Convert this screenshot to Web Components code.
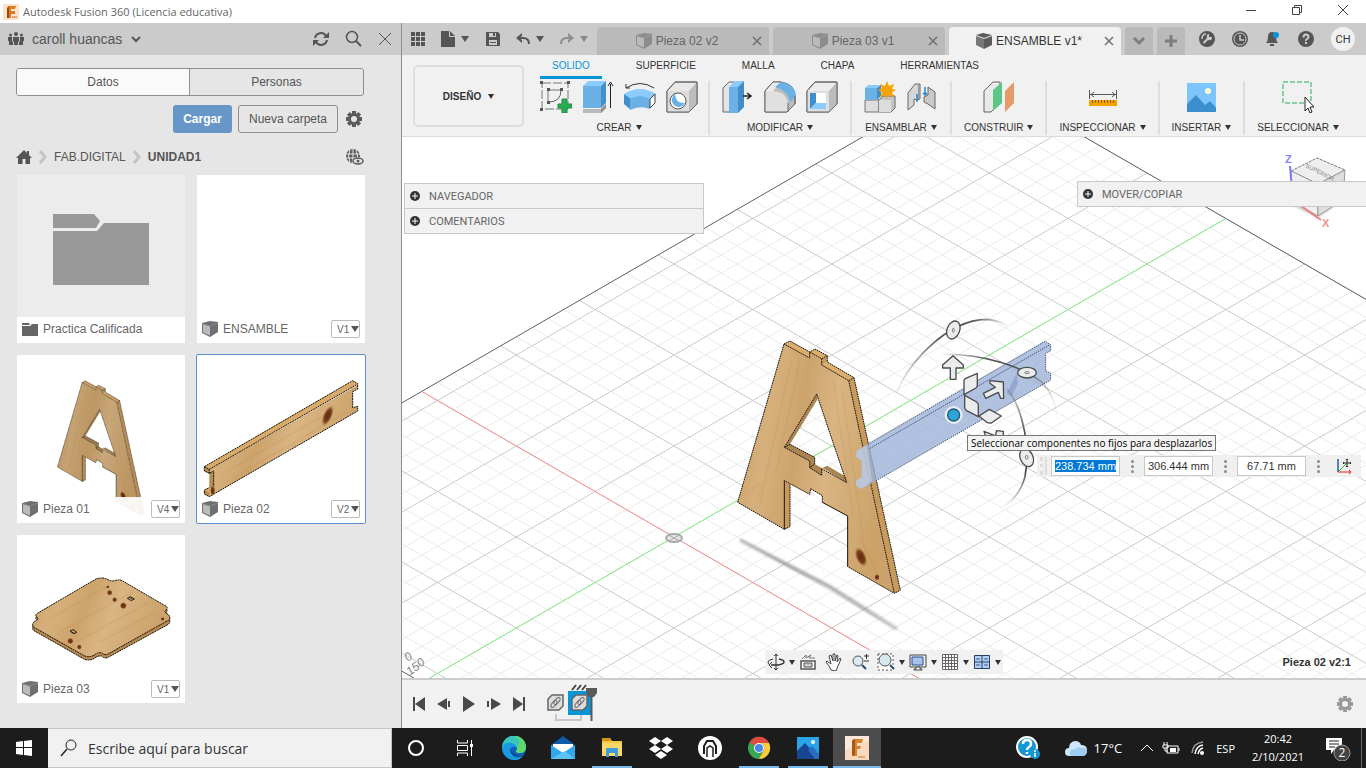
<!DOCTYPE html>
<html lang="es">
<head>
<meta charset="utf-8">
<title>Autodesk Fusion 360 (Licencia educativa)</title>
<style>
  html, body { height: 100%; }
  body {
    margin: 0;
    display: flex;
    flex-direction: column;
    overflow: hidden;
    font-family: "Liberation Sans", Arial, sans-serif;
    font-size: 12px;
    color: #333;
    background: #fff;
  }
  main { flex: 1; min-height: 0; display: flex; }
  .workspace { flex: 1; min-width: 0; display: flex; flex-direction: column; }
</style>
</head>
<body>
<title-bar>Autodesk Fusion 360 (Licencia educativa)</title-bar>
<main>
  <data-panel user="caroll huancas">
    <data-card label="Practica Calificada" folder>
      <svg viewBox="0 0 168 168"><g fill="#999"><path d="M36 39H77L83 46 79 53H36Z"/><path d="M36 56H80L87 48H132V110H36Z"/></g></svg>
    </data-card>
    <data-card label="ENSAMBLE" version="V1"></data-card>
    <data-card label="Pieza 01" version="V4"><wood-part kind="letter"></wood-part></data-card>
    <data-card label="Pieza 02" version="V2" selected><wood-part kind="plank"></wood-part></data-card>
    <data-card label="Pieza 03" version="V1"><wood-part kind="plate"></wood-part></data-card>
  </data-panel>
  <div class="workspace">
    <doc-bar>
      <doc-tab>Pieza 02 v2</doc-tab>
      <doc-tab>Pieza 03 v1</doc-tab>
      <doc-tab active>ENSAMBLE v1*</doc-tab>
    </doc-bar>
    <tool-ribbon>
      <ribbon-group label="CREAR" icons="sketch extrude revolve hole"></ribbon-group>
      <ribbon-group label="MODIFICAR" icons="presspull fillet shell"></ribbon-group>
      <ribbon-group label="ENSAMBLAR" icons="newcomp joint"></ribbon-group>
      <ribbon-group label="CONSTRUIR" icons="plane"></ribbon-group>
      <ribbon-group label="INSPECCIONAR" icons="measure"></ribbon-group>
      <ribbon-group label="INSERTAR" icons="picture"></ribbon-group>
      <ribbon-group label="SELECCIONAR" icons="select"></ribbon-group>
    </tool-ribbon>
    <model-canvas></model-canvas>
    <time-line></time-line>
  </div>
</main>
<task-bar></task-bar>

<script>
const gear = (c, hole) => `
  <g fill="${c}"><circle cx="8" cy="8" r="6"/>
  <path d="M6 0h4v16H6zM0 6h16v4H0z"/>
  <path d="M6 0h4v16H6zM0 6h16v4H0z" transform="rotate(45 8 8)"/></g>
  <circle cx="8" cy="8" r="3" fill="${hole}"/>`

// name: [width, height, drawing]
const ICONS = {
  fusion: [16, 16, `<path d="M0 0h16v16H0z" fill="#fbe3d0"/><path d="M5 2h8l-1 3H8v2h4v3H8v4H4V4z" fill="#e07a1f"/><path d="M4 4l2-1v11H4z" fill="#9a4a10"/><path d="M9 13h5" stroke="#e8a46a" stroke-width="2"/>`],
  fusionBig: [24, 24, `<path d="M0 0h24v24H0z" fill="#fbe8da"/><path d="M0 14L24 4v20H0z" fill="#f9d9c0"/><path d="M8 3h10l-1 4h-5v3h4l-1 3h-3v7H7V5z" fill="#d9822b"/><path d="M7 5l3-2v16l-3 1z" fill="#a85a17"/><path d="M13 21h7" stroke="#e8a46a" stroke-width="2"/>`],
  minimize: [12, 12, `<path d="M1 6.500h10" stroke="#444"/>`],
  restore: [12, 12, `<path d="M1.500 3.500h7v7h-7zM3.500 3V1.500h7v7H9" fill="none" stroke="#444"/>`],
  close: [12, 12, `<path d="M1 1l10 10M11 1L1 11" stroke="#444" fill="none"/>`],
  people: [16, 14, `<g fill="#555"><circle cx="2.500" cy="3" r="1.500"/><circle cx="8" cy="2" r="2"/><circle cx="13.500" cy="3" r="1.500"/><path d="M0 5h4v4l1 1v3H1V9H0zM5 5h6v4l-1 1v3H6v-3L5 9zM12 5h4v4h-1v4h-4v-3l1-1z"/></g>`],
  chevron: [12, 8, `<path d="M2 2l4 4 4-4" fill="none" stroke="#555" stroke-width="2"/>`],
  chevronGrey: [16, 10, `<path d="M3 2l5 5 5-5" fill="none" stroke="#7d7d7d" stroke-width="3"/>`],
  refresh: [18, 16, `<g fill="none" stroke="#555" stroke-width="2"><path d="M3 7a6 6 0 0 1 11-2M15 9a6 6 0 0 1-11 2"/></g><path d="M17 1v6h-6zM1 15V9h6z" fill="#555"/>`],
  search: [18, 18, `<circle cx="7" cy="7" r="5.500" fill="none" stroke="#555" stroke-width="1.500"/><path d="M11 11l5 5" stroke="#555" stroke-width="2"/>`],
  bigClose: [14, 14, `<path d="M1 1l12 12M13 1L1 13" stroke="#555" fill="none"/>`],
  gear: [16, 16, gear('#5b5b5b', '#e6e6e6')],
  gearGrey: [16, 16, gear('#999', '#f1f1f1')],
  home: [16, 14, `<path d="M8 0l3 3V1h2v4l3 3h-2v6H9.500V9h-3v5H2V8H0z" fill="#555"/>`],
  crumb: [8, 14, `<path d="M1 1l5 6-5 6" fill="none" stroke="#c4c4c4" stroke-width="3"/>`],
  globe: [18, 16, `<circle cx="7" cy="7" r="7" fill="#5b5b5b"/><path d="M0 5h14M0 9h14M7 0v14M4 1Q1 7 4 13M10 1q3 6 0 12" stroke="#e6e6e6" fill="none"/><ellipse cx="12" cy="12" rx="6" ry="4" fill="#e6e6e6"/><ellipse cx="12" cy="12" rx="5" ry="3" fill="none" stroke="#5b5b5b" stroke-width="1.500"/><circle cx="12" cy="12" r="1.500" fill="#5b5b5b"/>`],
  folder: [16, 13, `<path d="M0 0h7l1 1-1 1H0zM0 3h8l2-2h6v12H0z" fill="#666"/>`],
  cube: [16, 16, `<path d="M0 2l8-2 8 1v10l-8 5-8-4z" fill="#6f6f6f"/><path d="M1 3l7 2.500v9L1 11.500z" fill="#b9bcbb"/><path d="M0 2.500l8 2.500 8-3" fill="none" stroke="#8a8a8a"/>`],
  cubeDark: [16, 16, `<path d="M0 2l7-2 9 2-8 3z" fill="#5b5b5b"/><path d="M0 3l8 3v10l-8-4z" fill="#777"/><path d="M8 6l8-3v9l-8 4z" fill="#5b5b5b"/><path d="M0 2.500l8 3 8-3" stroke="#bbb" fill="none"/>`],
  caret: [8, 6, `<path d="M0 0h8L4 6z" fill="#555"/>`],
  caretSmall: [6, 5, `<path d="M0 0h6L3 5z" fill="#333"/>`],
  apps: [14, 14, `<path d="M0 0h4v4H0zM5 0h4v4H5zM10 0h4v4h-4zM0 5h4v4H0zM5 5h4v4H5zM10 5h4v4h-4zM0 10h4v4H0zM5 10h4v4H5zM10 10h4v4h-4z" fill="#555"/>`],
  file: [14, 16, `<path d="M0 0h8v6h6v10H0zM9 0l5 5H9z" fill="#555"/>`],
  save: [14, 14, `<path d="M0 0h12l2 2v12H0z" fill="#555"/><path d="M3 1h7v4H3zM3 8h8v5H3z" fill="#ccc"/><path d="M7 1h2v3H7zM4 10h6v1H4z" fill="#555"/>`],
  undo: [14, 12, `<path d="M6 0v3l-3 2 3 2v3L0 5z" fill="#555"/><path d="M2 5h5q6 0 6 6" fill="none" stroke="#555" stroke-width="2"/>`],
  redo: [14, 12, `<path d="M8 0v3l3 2-3 2v3l6-5z" fill="#8d8d8d"/><path d="M12 5H7q-6 0-6 6" fill="none" stroke="#8d8d8d" stroke-width="2"/>`],
  tabClose: [10, 10, `<path d="M1 1l8 8M9 1L1 9" stroke="#707070" stroke-width="1.500"/>`],
  plus: [14, 14, `<path d="M7 1v12M1 7h12" stroke="#7d7d7d" stroke-width="3"/>`],
  extension: [16, 16, `<circle cx="8" cy="8" r="8" fill="#555"/><path d="M4 11l4-4q-1-4 2-4v3h3q0 4-4 3l-4 4z" fill="#ccc"/><path d="M3 8q0-5 4-5" stroke="#ccc" stroke-width="1.500" fill="none"/>`],
  clock: [16, 16, `<circle cx="8" cy="8" r="8" fill="#555"/><circle cx="8" cy="8" r="6" fill="none" stroke="#ccc"/><path d="M8 4v5h4" stroke="#ccc" stroke-width="1.500" fill="none"/>`],
  bell: [16, 16, `<path d="M7 1q4 0 4 5 0 4 2 6H1q2-2 2-6 0-5 4-5zM5 13h4v2H5z" fill="#555"/><circle cx="11" cy="4" r="3" fill="#0696d7"/>`],
  help: [16, 16, `<circle cx="8" cy="8" r="8" fill="#555"/><path d="M5.500 6.500q0-3 2.500-3t2.500 2.500q0 1-1.500 2T8 10" stroke="#ccc" stroke-width="2" fill="none"/><path d="M7 11h2v2H7z" fill="#ccc"/>`],
  sketch: [32, 32, `<path d="M2 2h26v26H2z" fill="none" stroke="#777" stroke-dasharray="9 2"/><path d="M8 22V9h14" fill="none" stroke="#777"/><path d="M21 9q0 12-12 12" fill="none" stroke="#666"/><path d="M0 0h3v3H0zM27 0h3v3h-3zM0 27h3v3H0zM7 7h3v3H7zM20 7h3v3h-3zM7 20h3v3H7z" fill="#555"/><path d="M22 18h5v5h5v4h-5v5h-5v-5h-4v-4h4z" fill="#27ae55" stroke="#1d9145"/>`],
  extrude: [32, 32, `<path d="M1 28h18l5-4v3l-5 5H1z" fill="#b9b9b9"/><path d="M19 28l5-5v4l-5 5z" fill="#8e8e8e"/><path d="M1 5h18v22H1z" fill="#6cb1e6"/><path d="M1 5l5-5h18l-5 5z" fill="#8ccbff"/><path d="M19 5l5-5v22l-5 5z" fill="#4190cc"/><path d="M28.500 27V3M26 5l2.500-4L31 5" stroke="#222" fill="none"/>`],
  revolve: [32, 32, `<path d="M0 13Q16 3 32 13l-6 6Q16 13 6 19z" fill="#8ccbff"/><path d="M0 13l7 5v11l-7-6z" fill="#3f8ecb"/><path d="M6 18q10-6 20 0v10q-10-4-20 1z" fill="#6cb1e6"/><path d="M26 18l5-5v9l-5 5z" fill="#fff" stroke="#444"/><path d="M2 7Q16-2 30 7M2 3v4h4" fill="none" stroke="#333"/>`],
  hole: [32, 32, `<path d="M1 10l8-9h22v22l-8 8H1z" fill="#e9e9e9" stroke="#666"/><path d="M23 10l8-9v22l-8 8z" fill="#bcbcbc"/><path d="M1 10h22v21H1z" fill="#dcdcdc"/><path d="M1 10l8-9h22v22l-8 8H1z" fill="none" stroke="#666"/><circle cx="12" cy="20" r="8" fill="#fff" stroke="#555"/><path d="M9 13a7 7 0 1 0 10 9Q10 23 9 13z" fill="#6cb1e6"/>`],
  presspull: [32, 32, `<path d="M1 7l6-6h5v30H1z" fill="#e4e4e4" stroke="#666"/><path d="M7 6h9v26H7z" fill="#6cb1e6"/><path d="M7 6l6-6h9l-6 6z" fill="#8ccbff"/><path d="M16 6l6-6v26l-6 6z" fill="#3f8ecb"/><path d="M21 15h8M25 12l4 3-4 3" stroke="#222" stroke-width="1.500" fill="none"/>`],
  fillet: [32, 32, `<path d="M1 10l8-9h8q14 2 14 14v8l-8 8H1z" fill="#bcbcbc" stroke="#666"/><path d="M1 10h8q14 1 15 13v8H1z" fill="#e0e0e0"/><path d="M1 10l8-9h8l-8 9z" fill="#ededed"/><path d="M11 6l6-5q14 2 15 14l-6 6Q24 9 11 6z" fill="#6cb1e6"/><path d="M17 1L9 1 1 10v21h22l8-8v-8M24 31V22" fill="none" stroke="#666"/>`],
  shell: [32, 32, `<path d="M1 10l8-9h22v22l-8 8H1z" fill="#ededed" stroke="#666"/><path d="M23 10l8-9v22l-8 8z" fill="#bcbcbc"/><path d="M1 10h22v21H1z" fill="#dedede"/><path d="M1 10l8-9h22v22l-8 8H1z" fill="none" stroke="#666"/><path d="M4 12h16v16H4z" fill="#fff"/><path d="M4 12h6v10l-6 6z" fill="#3f8ecb"/><path d="M4 28l6-6h10v6z" fill="#8ccbff"/>`],
  newcomp: [32, 32, `<path d="M1 19h14v12H1z" fill="#ddd" stroke="#777"/><path d="M15 19l4-4h12v12l-4 4H15z" fill="#c4c4c4" stroke="#666"/><path d="M15 19h12v12H15z" fill="#dcdcdc"/><path d="M1 7h12v12H1z" fill="#6cb1e6"/><path d="M1 7l3-3h13l-4 3z" fill="#8ccbff"/><path d="M13 7l4-3v11l-4 4z" fill="#3f8ecb"/><path d="M23 0l2 5 5-2-2 5 4 1-4 2 2 5-5-2-2 4-2-4-5 2 2-5-4-2 4-2-2-4 5 2z" fill="#f5a300"/>`],
  joint: [32, 32, `<path d="M2 12L9 3h5v15l-3 1-3-1v6l-6 5z" fill="#d7d7d7" stroke="#666"/><path d="M13 4v14" stroke="#999" stroke-width="2"/><path d="M18 16l4-2V6l7 5v17l-7-5-4-2z" fill="#c9c9c9" stroke="#666"/><path d="M11 21v-8M19 6v8M17 12l2 2 2-2" stroke="#1a86d8" stroke-width="1.500" fill="none"/>`],
  plane: [32, 32, `<path d="M1 10l9-9h7v21l-9 9H1z" fill="#e9e9e9" stroke="#666"/><path d="M10 9l9-8v21l-9 8z" fill="#5cc685"/><path d="M22 10l9-9v21l-9 9z" fill="#e59a68"/>`],
  measure: [32, 32, `<path d="M2.500 9v9M29.500 9v9M3 13.500h26M7 11l-3 2.500 3 2.500M25 11l3 2.500-3 2.500" stroke="#555" fill="none"/><path d="M2 19h28v6H2z" fill="#f5a300"/><path d="M5.500 19v3M8.500 19v3M11.500 19v3M14.500 19v3M17.500 19v3M20.500 19v3M23.500 19v3M26.500 19v3" stroke="#8b5a00"/>`],
  picture: [32, 32, `<path d="M2 2h29v29H2z" fill="#7cc5fd"/><path d="M2 23l9-9 9 10 5-4 6 7v4H2z" fill="#3b8fce"/><circle cx="23" cy="10" r="3" fill="#fdfbd0"/>`],
  select: [32, 32, `<path d="M1 1h28v21H1z" fill="none" stroke="#27ae55" stroke-dasharray="5 2"/><path d="M23 16v14l3-3 2 5 2-1-2-5h4z" fill="#fff" stroke="#222"/>`],
  add: [10, 10, `<circle cx="5" cy="5" r="5" fill="#333"/><path d="M5 2v6M2 5h6" stroke="#fff"/>`],
  orbit: [18, 18, `<path d="M9 1v16M7 3l2-2 2 2M7 15l2 2 2-2" stroke="#333" fill="none"/><path d="M12 6q5 1 5 3t-6 3H4" fill="none" stroke="#333" stroke-width="1.500"/><path d="M6 6Q1 7 1 9t2 3M5 9l-3 3 3 3" fill="none" stroke="#333"/>`],
  lookat: [18, 18, `<path d="M2 8h14v8H2z" fill="#fff" stroke="#555" stroke-width="1.500"/><path d="M5 10h8v4H5z" fill="#ccc" stroke="#555"/><path d="M3 6l4-4v3l5-3-2 3h6" fill="none" stroke="#777"/>`],
  hand: [18, 18, `<path d="M6 17Q4 12 1 9l1-1 4 3L4 3l2-1 2 6V1h2v7l2-6 1 1-1 6 3-4 1 1-3 7-2 5z" fill="#fff" stroke="#444"/>`],
  zoom: [18, 18, `<circle cx="7" cy="8" r="5" fill="#dce9ef" stroke="#555"/><path d="M11 12l4 4" stroke="#284a70" stroke-width="2"/><path d="M13 3h5M15.500 1v5M13 8h5" stroke="#333"/>`],
  zoomWin: [18, 18, `<path d="M1 1h15v16H1z" stroke="#555" stroke-dasharray="2 2" fill="#fff"/><circle cx="8" cy="7" r="6" fill="#d5e8ec" stroke="#555"/><path d="M13 12l4 4" stroke="#284a70" stroke-width="2"/>`],
  display: [18, 18, `<path d="M1 2h16v12H1z" fill="#eee" stroke="#444"/><path d="M3 4h11v8H3z" fill="#a6c4ed" stroke="#27508c"/><path d="M7 14h4v2h2v1H5v-1h2z" fill="#fff" stroke="#444"/>`],
  grid: [18, 18, `<path d="M1 1h16v16H1z" fill="#fff"/><path d="M1.500 1.500h15v15h-15zM4.500 1v16M7.500 1v16M10.500 1v16M13.500 1v16M1 4.500h16M1 7.500h16M1 10.500h16M1 13.500h16" stroke="#666" fill="none"/>`],
  layout: [18, 18, `<path d="M1.500 2.500h15v13h-15z" fill="#b4cff2" stroke="#273f68"/><path d="M9 3v12M1 9h15" stroke="#273f68"/><path d="M3.500 5.500h3v1h-3zM11.500 5.500h3v1h-3zM3.500 11.500h3v1h-3zM11.500 11.500h3v1h-3z" fill="none" stroke="#6d8db8"/>`],
  triad: [16, 16, `<path d="M2 1v13" stroke="#1f5f99" stroke-width="1.500"/><path d="M2 14l8-8" stroke="#2eb82e"/><path d="M2 14h13M13 12l2 2-2 2" stroke="#e02020" fill="none"/><path d="M11 1v8M7 5h8M10 2l1-1 1 1M10 8l1 1 1-1M8 4L7 5l1 1M14 4l1 1-1 1" stroke="#222" fill="none"/>`],
  first: [14, 16, `<path d="M1 1h2v14H1zM13 1v14L3 8z" fill="#4a4a4a"/>`],
  back: [14, 16, `<path d="M10 2v12L0 8zM11 5h2v6h-2z" fill="#4a4a4a"/>`],
  play: [14, 16, `<path d="M1 0l12 8-12 8z" fill="#4a4a4a"/>`],
  next: [14, 16, `<path d="M4 2v12l10-6zM0 5h2v6H0z" fill="#4a4a4a"/>`],
  last: [14, 16, `<path d="M11 1h2v14h-2zM1 1v14l10-7z" fill="#4a4a4a"/>`],
  history: [56, 40, `<path d="M9 30v6h25v-6" fill="none" stroke="#c8c8c8" stroke-width="2"/>
    <path d="M21 7h24v24H21z" fill="#0696d7"/><path d="M25 6l4-5M30 6l4-5M35 6l4-5" stroke="#444" stroke-width="2"/>
    <g id="f"><path d="M1 15l4-4h11v11l-4 4H1z" fill="#ddd" stroke="#666" stroke-width="1.500"/><ellipse cx="7" cy="20" rx="2" ry="4" transform="rotate(40 7 20)" fill="none" stroke="#666"/><ellipse cx="10" cy="17" rx="2" ry="4" transform="rotate(40 10 17)" fill="none" stroke="#666"/></g>
    <use href="#f" x="24"/><path d="M39 4h11v5l-3 4h-5l-3-4z" fill="#5a5a5a"/><path d="M44.500 11v26" stroke="#5a5a5a" stroke-width="2"/>`],
  windows: [16, 16, `<path d="M0 2l7-1v6H0zM8 1l8-1v7H8zM0 8h7v7l-7-1zM8 8h8v8l-8-1z" fill="#fff"/>`],
  loupe: [18, 18, `<circle cx="11" cy="6" r="5" fill="none" stroke="#222"/><path d="M7 10l-6 7" stroke="#222" stroke-width="1.500"/>`],
  cortana: [24, 24, `<circle cx="12" cy="12" r="7" fill="none" stroke="#fff" stroke-width="2"/>`],
  taskview: [24, 24, `<path d="M4.500 4v3h10V4M4.500 20v-3h10v3M4.500 9.500h10v5h-10zM18.500 4v16" fill="none" stroke="#fff"/><path d="M17 8h3v3h-3z" fill="#fff"/>`],
  edge: [24, 24, `<circle cx="12" cy="12" r="12" fill="#0c63b8"/><path d="M0 12a12 12 0 0 1 24-1q0 6-6 6-4 0-4-2 2-2 0-5-5-5-14 2z" fill="#35c6c0"/><path d="M12 0q11 1 12 10 0 7-6 7-4 0-4-2 2-2 1-5Q21 6 12 0z" fill="#5fd86a"/><path d="M0 12q2-6 9-5 5 1 6 5-4-3-6 0-2 4 2 8 5 3 10 0-4 5-10 4Q1 22 0 12z" fill="#1a9ade"/><path d="M9 12q-2 4 2 7 5 3 10 0-2 1-6 0-6-2-6-7z" fill="#0a4a94"/>`],
  mail: [24, 24, `<path d="M0 9l12-9 12 9v14H0z" fill="#0c5cab"/><path d="M2 8h20v10H2z" fill="#fff"/><path d="M0 9l12 8 12-8v14H0z" fill="#2fa9ec"/><path d="M0 23l14-8 10 8z" fill="#5cc4f5"/>`],
  explorer: [24, 24, `<path d="M2 2h8l2 3h10v15H2z" fill="#f6c944"/><path d="M2 2h8l2 3H2z" fill="#d59510"/><path d="M2 7h20v13H2z" fill="#fbd765"/><path d="M6 12h12v9h-3v-4H9v4H6z" fill="#3f9be0"/>`],
  dropbox: [24, 24, `<path d="M6 1l6 4-6 4-6-4zM18 1l6 4-6 4-6-4zM6 9l6 4-6 4-6-4zM18 9l6 4-6 4-6-4zM12 15l6 4-6 4-6-4z" fill="#fff"/>`],
  arch: [24, 24, `<circle cx="12" cy="12" r="12" fill="#fff"/><path d="M6 18v-8l3-5h6l3 5v8" fill="none" stroke="#1c1c1c" stroke-width="2"/><path d="M9 21v-9l3-2 3 2v9" fill="none" stroke="#1c1c1c" stroke-width="1.500"/>`],
  chrome: [24, 24, `<circle cx="12" cy="12" r="11" fill="#3aa655"/><path d="M12 12L2.500 6.500A11 11 0 0 1 22 7H12z" fill="#e04a3f"/><path d="M22 7a11 11 0 0 1-10 16l5-9q1-4-3-7z" fill="#fbcb3c"/><circle cx="12" cy="12" r="5" fill="#fff"/><circle cx="12" cy="12" r="4" fill="#4a86ee"/>`],
  photos: [24, 24, `<path d="M1 1h22v22H1z" fill="#28a4ea"/><path d="M1 15l8-8 14 16H1z" fill="#17458f"/><path d="M12 14l4-4 7 8v5h-4z" fill="#2c6cc0"/><circle cx="17" cy="6" r="2" fill="#fff"/>`],
  support: [24, 24, `<circle cx="11" cy="11" r="10" fill="#1596d4" stroke="#fff" stroke-width="2"/><path d="M7 8q0-4 4-4t4 4q0 2-2 3t-2 3M11 16v2" fill="none" stroke="#fff" stroke-width="2.500"/><circle cx="19" cy="18" r="5" fill="#1596d4"/><path d="M19 14v2M19 17v4" stroke="#fff" stroke-width="1.500"/>`],
  cloud: [24, 18, `<path d="M5 17q-4 0-4-4t4-4q0-6 6-7 5 0 6 4 6 0 6 5 0 6-5 6z" fill="#cde6fa"/><path d="M8 17q-3-1-2-4t5-3q2-3 6-1 5-1 6 2 0 6-5 6z" fill="#9fcdf2"/>`],
  up: [14, 8, `<path d="M1 7l6-6 6 6" fill="none" stroke="#fff"/>`],
  battery: [18, 14, `<path d="M5 5h11v7H5zM17 7v3" fill="none" stroke="#fff"/><path d="M8 7h6v4H8z" fill="#fff"/><path d="M2 1v3M5 1v3M1 4h5v3H1zM3 7v3h3" fill="none" stroke="#fff"/>`],
  wifi: [16, 16, `<path d="M2 13Q3 3 13 2" stroke="#999" fill="none" stroke-width="1.500"/><path d="M5 14q1-8 8-9M8 14q1-5 5-6" stroke="#fff" fill="none" stroke-width="1.500"/><circle cx="12" cy="13" r="2" fill="#fff"/>`],
  notify: [26, 26, `<path d="M1 3h16v12H9l-3 4v-4H1z" fill="#fff"/><path d="M4 6h10M4 9h10M4 12h6" stroke="#1c1c1c"/><circle cx="17" cy="18" r="8" fill="#444" stroke="#999"/><text x="17" y="22" font-size="12" text-anchor="middle" fill="#fff">2</text>`]
}

class BaseElement extends HTMLElement {
  constructor() {
    super()
    this.attachShadow({ mode: 'open' })
  }
  connectedCallback() {
    this.shadowRoot.innerHTML = this.render()
  }
}

const RESET = `
  button, input, select { font: inherit; color: inherit; margin: 0; padding: 0; border: 0; background: none; box-sizing: border-box; }
  button { display: flex; align-items: center; justify-content: center; }
  a { color: inherit; text-decoration: none; }
`

class FxIcon extends BaseElement {
  render() {
    const [w, h, art] = ICONS[this.getAttribute('name')]
    return `<style>:host { display: block; flex: none; } svg { display: block; }</style>
      <svg width="${w}" height="${h}" viewBox="0 0 ${w} ${h}" aria-hidden="true">${art}</svg>`
  }
}

class TitleBar extends BaseElement {
  render() {
    return `<style>${RESET}
        :host { display: flex; align-items: center; height: 23px; padding-left: 3px; gap: 4px; background: #fff; color: #666; font: 11px "Open Sans", sans-serif; }
        h1 { flex: 1; margin: 0; font: inherit; }
        button { width: 46px; height: 20px; }
        .window { display: flex; align-self: flex-start; }
      </style>
      <fx-icon name="fusion"></fx-icon><h1><slot></slot></h1>
      <div class="window">
        <button aria-label="Minimizar"><fx-icon name="minimize"></fx-icon></button>
        <button aria-label="Restaurar"><fx-icon name="restore"></fx-icon></button>
        <button aria-label="Cerrar"><fx-icon name="close"></fx-icon></button>
      </div>`
  }
}

class DataPanel extends BaseElement {
  render() {
    return `<style>${RESET}
        :host { display: flex; flex-direction: column; width: 401px; flex: none; background: #e6e6e6; border-right: 1px solid #8f8f8f; color: #555; }
        header { display: flex; align-items: center; height: 32px; padding: 0 9px 0 8px; background: #cbcbcb; font-size: 14px; }
        header .user { gap: 8px; margin-right: auto; }
        header .tools { display: flex; align-items: center; gap: 15px; }
        .body { padding: 13px 37px 0 16px; }
        .segments { display: grid; grid-template-columns: 1fr 1fr; height: 28px; box-sizing: border-box; border: 1px solid #8f8f8f; border-radius: 3px; overflow: hidden; }
        .segments .on { background: #fafafa; border-right: 1px solid #8f8f8f; }
        .actions { display: flex; justify-content: flex-end; align-items: center; gap: 6px; height: 28px; margin-top: 9px; padding-right: 2px; }
        .actions button { height: 28px; border-radius: 3px; }
        .primary { width: 59px; background: #6796c9; color: #fff; font-weight: bold; }
        .plain { width: 100px; border: 1px solid #8f8f8f; margin-right: 2px; }
        nav { display: flex; align-items: center; gap: 7px; height: 18px; margin: 15px 0 9px; }
        nav b { flex: 1; }
        .grid { display: grid; grid-template-columns: 1fr 1fr; gap: 12px; margin: 0 -1px 0 1px; }
      </style>
      <header>
        <button class="user"><fx-icon name="people"></fx-icon>${this.getAttribute('user')}<fx-icon name="chevron"></fx-icon></button>
        <div class="tools">
          <button aria-label="Actualizar"><fx-icon name="refresh"></fx-icon></button>
          <button aria-label="Buscar"><fx-icon name="search"></fx-icon></button>
          <button aria-label="Cerrar panel"><fx-icon name="bigClose"></fx-icon></button>
        </div>
      </header>
      <div class="body">
        <div class="segments"><button class="on">Datos</button><button>Personas</button></div>
        <div class="actions">
          <button class="primary">Cargar</button><button class="plain">Nueva carpeta</button>
          <button aria-label="Ajustes"><fx-icon name="gear"></fx-icon></button>
        </div>
        <nav>
          <a href="#" aria-label="Inicio"><fx-icon name="home"></fx-icon></a><fx-icon name="crumb"></fx-icon>
          <a href="#">FAB.DIGITAL</a><fx-icon name="crumb"></fx-icon><b>UNIDAD1</b><fx-icon name="globe"></fx-icon>
        </nav>
        <div class="grid"><slot></slot></div>
      </div>`
  }
}

class DataCard extends BaseElement {
  render() {
    const folder = this.hasAttribute('folder')
    const version = this.getAttribute('version')
    return `<style>${RESET}
        :host { display: grid; grid-template-rows: 1fr 26px; height: 168px; background: #fff; color: #666; overflow: hidden; }
        :host([folder]) { background: linear-gradient(#ececec 142px, #fff 142px); }
        :host([selected]) { outline: 1px solid #5c8fd0; border-radius: 1px; }
        ::slotted(*) { grid-area: 1 / 1 / 3 / 2; display: block; width: 100%; height: 168px; }
        footer { grid-area: 2 / 1; position: relative; display: flex; align-items: center; gap: 5px; padding: 0 5px 2px; background: rgba(255,255,255,.92); }
        .name { flex: 1; }
        .version { display: grid; align-items: center; }
        select { grid-area: 1 / 1; appearance: none; width: 29px; height: 18px; padding-left: 5px; border: 1px solid #bbb; border-radius: 2px; background: #fff; font-size: 10px; }
        .version fx-icon { grid-area: 1 / 1; justify-self: end; margin-right: 1px; pointer-events: none; }
      </style>
      <slot></slot>
      <footer>
        <fx-icon name="${folder ? 'folder' : 'cube'}"></fx-icon><span class="name">${this.getAttribute('label')}</span>
        ${version ? `<label class="version"><select aria-label="Versión"><option>${version}</option></select><fx-icon name="caret"></fx-icon></label>` : ''}
      </footer>`
  }
}

const WOOD = `<defs>
    <linearGradient id="wood" x1="0" y1="0" x2="1" y2=".25">
      <stop offset="0" stop-color="#c69c63"/><stop offset=".25" stop-color="#d6b07c"/><stop offset=".45" stop-color="#cda36c"/>
      <stop offset=".65" stop-color="#d9b583"/><stop offset="1" stop-color="#cca26a"/>
    </linearGradient>
    <radialGradient id="knot"><stop offset="0" stop-color="#5d2a12"/><stop offset=".6" stop-color="#7b3f1d"/><stop offset="1" stop-color="#b07a42" stop-opacity="0"/></radialGradient>
  </defs>`

const LETTER = `
  <path fill="url(#wood)" fill-rule="evenodd" d="M192 42L269 84V66L305 86V105L386 152L523 790L383 710V558L307 517V497L272 476L269 493L193 452V598L53 517Z M290 192L193 352L269 393V413L305 436V416L380 458Z"/>
  <g fill="none" stroke="#b78546" stroke-width="4" opacity=".18"><path d="M215 90L120 520M240 90L170 420M340 150L400 560M365 170L440 700M95 480q40-40 20 20M420 620l60 130"/></g>
  <g fill="#dcae6b"><path d="M192 42L210 33 269 66V84ZM305 105L322 96 402 143 386 152ZM269 66L285 57 322 77 305 86Z"/></g>
  <path fill="#c89a5c" d="M305 86L322 77V96L305 105ZM386 152L402 143 541 781 523 790ZM193 452L210 461V590L193 598Z"/>
  <path fill="#ac8452" d="M290 192L293 207 210 343 193 352ZM193 352L210 343 284 382V402L269 413V393ZM269 413L284 402 307 415 305 436ZM307 413L322 407 378 440 380 458Z"/>
  <g fill="none" stroke="#161009" stroke-width="3"><path stroke-dasharray="5 2" d="M192 42L269 84V66L305 86V105L386 152L523 790L383 710M307 517V497L272 476L269 493L193 452M193 598L53 517L192 42M290 192L193 352L269 393V413L305 436V416L380 458ZM192 42L210 33 269 66 285 57 322 77V96L402 143 541 781 523 790M386 152L402 143M305 86L322 77M193 598L210 590V463M193 352L210 343 284 382V402L269 413"/><path d="M193 452V598M383 710V558L307 517"/></g>
  <ellipse cx="423" cy="681" rx="16" ry="32" transform="rotate(-22 423 681)" fill="url(#knot)"/><ellipse cx="471" cy="742" rx="8" ry="10" fill="url(#knot)"/>`

const PARTS = {
  letter: ['0 0 168 168', `<g transform="translate(31 20) scale(.178)" style="filter: brightness(.92)">${LETTER}</g>`],
  plank: ['591 30 504 504', `
    <path fill="url(#wood)" d="M628 374L1073 120V132L1058 140V188L1073 184V198L628 455 613 447V435L628 430 641 420V378L628 384Z"/>
    <path fill="#b98a50" d="M613 365L628 372V386L613 378ZM628 384L641 378V424L628 432ZM613 435L628 441V455L613 447Z"/>
    <path fill="#d9ab66" d="M613 365L1058 107 1073 116 628 373ZM613 435L628 427 641 434 628 441Z"/>
    <path fill="none" stroke="#b78546" stroke-width="4" opacity=".2" d="M680 380L980 205M700 400L1040 200M800 340q60-40 90-40"/>
    <path fill="none" stroke="#161009" stroke-width="3" stroke-dasharray="6 2" d="M613 365L1058 107 1073 116V132L1058 140V188L1073 184V198L628 455 613 447V435L628 428M613 365L628 373 1073 117M613 365V378L628 385 641 378V425M628 373V385"/>
    <ellipse cx="983" cy="212" rx="14" ry="34" transform="rotate(24 983 212)" fill="url(#knot)"/><ellipse cx="638" cy="437" rx="8" ry="16" fill="url(#knot)"/>`],
  plate: ['51 570 504 504', `
    <g stroke="#161009" stroke-width="3" stroke-dasharray="6 2"><path fill="#b98a50" transform="translate(0 8)" d="M290 701Q310 696 322 703T345 707Q358 702 368 708L490 779Q508 786 498 795 490 802 505 808 514 820 505 830L326 928Q315 935 305 925 290 924 282 933 265 941 250 933L100 848Q95 838 103 829 116 825 113 818 102 812 112 805Z"/>
    <path fill="url(#wood)" d="M290 701Q310 696 322 703T345 707Q358 702 368 708L490 779Q508 786 498 795 490 802 505 808 514 820 505 826L326 926Q315 933 305 923 290 922 282 931 265 939 250 931L100 846Q95 838 103 829 116 825 113 818 102 812 112 805Z"/></g>
    <path fill="none" stroke="#b98a4a" stroke-width="5" opacity=".2" d="M150 820L330 720M180 860L400 740M230 890L450 770M300 890L470 800"/>
    <g fill="url(#knot)"><circle cx="329" cy="743" r="9"/><circle cx="323" cy="726" r="5"/><circle cx="344" cy="764" r="8"/><circle cx="370" cy="782" r="11"/><circle cx="211" cy="888" r="10"/><circle cx="238" cy="906" r="8"/><circle cx="488" cy="822" r="6"/></g>
    <path stroke="#2d2414" stroke-width="3" fill="none" d="M382 760l12 7 9-5-12-7zM388 757l9 6M210 858l12 8 9-4-12-8zM214 862l10 3"/>`]
}

class WoodPart extends BaseElement {
  render() {
    const [box, art] = PARTS[this.getAttribute('kind')]
    return `<style>:host { display: block; } svg { display: block; width: 100%; height: 100%; }</style>
      <svg viewBox="${box}" aria-hidden="true">${WOOD}${art}</svg>`
  }
}

class DocBar extends BaseElement {
  render() {
    return `<style>${RESET}
        :host { display: flex; align-items: center; height: 32px; background: #cbcbcb; }
        .quick { display: flex; align-items: center; padding: 0 9px; width: 177px; box-sizing: content-box; justify-content: space-between; }
        .quick div { display: flex; align-items: center; gap: 6px; }
        .dim { opacity: .55; }
        .tabs { flex: 1; display: flex; align-self: flex-end; gap: 4px; }
        .tabs > button { width: 28px; height: 28px; background: #bababa; border-radius: 4px 4px 0 0; }
        .account { display: flex; align-items: center; gap: 17px; padding-right: 11px; }
        .avatar { width: 24px; height: 24px; border-radius: 50%; background: #f1f1f1; font: 11px Roboto, sans-serif; }
      </style>
      <div class="quick">
        <button aria-label="Panel de datos"><fx-icon name="apps"></fx-icon></button>
        <div><button aria-label="Archivo"><fx-icon name="file"></fx-icon></button><fx-icon name="caret"></fx-icon></div>
        <button aria-label="Guardar"><fx-icon name="save"></fx-icon></button>
        <div><button aria-label="Deshacer"><fx-icon name="undo"></fx-icon></button><fx-icon name="caret"></fx-icon></div>
        <div><button aria-label="Rehacer"><fx-icon name="redo"></fx-icon></button><fx-icon class="dim" name="caret"></fx-icon></div>
      </div>
      <div class="tabs"><slot></slot>
        <button aria-label="Más pestañas"><fx-icon name="chevronGrey"></fx-icon></button>
        <button aria-label="Nuevo diseño"><fx-icon name="plus"></fx-icon></button>
      </div>
      <div class="account">
        <button aria-label="Extensiones"><fx-icon name="extension"></fx-icon></button>
        <button aria-label="Estado de trabajos"><fx-icon name="clock"></fx-icon></button>
        <button aria-label="Notificaciones"><fx-icon name="bell"></fx-icon></button>
        <button aria-label="Ayuda"><fx-icon name="help"></fx-icon></button>
        <button class="avatar">CH</button>
      </div>`
  }
}

class DocTab extends BaseElement {
  render() {
    const active = this.hasAttribute('active')
    return `<style>${RESET}
        :host { display: flex; align-items: center; width: 172px; height: 28px; box-sizing: border-box; padding: 0 7px 0 5px; background: #bababa; border-radius: 4px 4px 0 0; color: #666; }
        :host([active]) { background: #f1f1f1; color: #333; }
        .title { flex: 1; gap: 4px; }
        .faded { opacity: .6; }
      </style>
      <button class="title"><fx-icon class="${active ? '' : 'faded'}" name="${active ? 'cubeDark' : 'cube'}"></fx-icon><slot></slot></button>
      <button aria-label="Cerrar pestaña"><fx-icon name="tabClose"></fx-icon></button>`
  }
}

class ToolRibbon extends BaseElement {
  render() {
    return `<style>${RESET}
        :host { display: flex; gap: 14px; height: 81px; padding-left: 11px; background: #f1f1f1; border-bottom: 1px solid #dcdcdc; font-size: 10px; }
        .space { width: 111px; height: 62px; margin-top: 10px; border: 2px solid #dedede; border-radius: 5px; gap: 7px; font-weight: bold; }
        .right { flex: 1; }
        nav { display: flex; gap: 22px; height: 24px; margin-left: 2px; }
        nav a { display: flex; align-items: center; padding: 0 12px; box-sizing: border-box; border-bottom: 3px solid transparent; }
        nav .on { color: #0696d7; border-color: #0696d7; }
        .groups { display: flex; margin-top: 2px; }
      </style>
      <button class="space">DISEÑO<fx-icon name="caretSmall"></fx-icon></button>
      <div class="right">
        <nav><a href="#" class="on">SOLIDO</a><a href="#">SUPERFICIE</a><a href="#">MALLA</a><a href="#">CHAPA</a><a href="#">HERRAMIENTAS</a></nav>
        <div class="groups"><slot></slot></div>
      </div>`
  }
}

class RibbonGroup extends BaseElement {
  render() {
    const icons = this.getAttribute('icons').split(' ')
    return `<style>${RESET}
        :host { display: flex; flex-direction: column; align-items: center; justify-content: space-between; height: 54px; padding: 0 12px; border-right: 2px solid #dedede; }
        :host(:first-child) { padding: 0 10px 0 2px; }
        :host(:last-child) { border: 0; }
        .tools { display: flex; gap: 10px; }
        .menu { gap: 4px; height: 16px; }
      </style>
      <div class="tools">${icons.map(i => `<button aria-label="${i}"><fx-icon name="${i}"></fx-icon></button>`).join('')}</div>
      <button class="menu">${this.getAttribute('label')}<fx-icon name="caretSmall"></fx-icon></button>`
  }
}

class FloatRow extends BaseElement {
  render() {
    return `<style>${RESET}
        :host { display: block; background: #f1f1f1; border: 1px solid #c8c8c8; color: #666; font: 11px Roboto, sans-serif; }
        :host(:not(:first-child)) { border-top: 0; }
        button { width: 100%; height: 24px; padding-left: 5px; gap: 9px; justify-content: flex-start; }
      </style>
      <button><fx-icon name="add"></fx-icon><slot></slot></button>`
  }
}

// Ground plane: u runs along the green axis, v along the red one
const ORIGIN = [674, 537]
const point = (u, v) => [ORIGIN[0] + 78.83 * (u + v), ORIGIN[1] + 45.5 * (v - u)].map(n => n.toFixed(1)).join(' ')
const segment = (a, b) => `M${point(...a)}L${point(...b)}`

function gridLines() {
  let minor = ''
  let major = ''
  for (let i = -16; i <= 65; i++) {
    const along = segment([-3.2, i / 5], [7, i / 5])
    const across = i <= 35 ? segment([i / 5, -3.2], [i / 5, 13]) : ''
    if (i % 5) minor += along + across
    else major += along + across
  }
  return `<path d="${minor}" stroke="#ebebeb"/><path d="${major}" stroke="#cacaca"/>
    <path d="${segment([-3.2, -3.2], [7, -3.2]) + segment([7, -3.2], [7, 13]) + segment([-3.2, -3.2], [-3.2, 13])}" stroke="#666"/>
    <path d="${segment([-3.2, 0], [7, 0])}" stroke="#86f586"/>
    <path d="${segment([0, -3.2], [0, 13])}" stroke="#ff8f8f"/>`
}

class ModelCanvas extends BaseElement {
  render() {
    return `<style>
        :host { display: block; flex: 1; min-height: 0; position: relative; overflow: hidden; background: #fff; }
        svg { display: block; width: 100%; height: 100%; }
        .browser { position: absolute; left: 2px; top: 46px; width: 300px; }
        .dialog { position: absolute; right: -1px; top: 44px; width: 290px; }
        .tip { position: absolute; left: 565px; top: 298px; padding: 0 3px; border: 1px solid #767676; background: #f3f3f3; color: #000; font: 10px/14px "Open Sans", sans-serif; white-space: nowrap; }
        move-fields { position: absolute; right: 5px; top: 318px; }
        view-tools { position: absolute; left: 363px; bottom: 4px; }
        .picked { position: absolute; right: 15px; bottom: 10px; font-size: 11px; font-weight: bold; color: #333; }
      </style>
      <svg viewBox="402 137 964 541" preserveAspectRatio="xMinYMin slice" role="img" aria-label="Modelo 3D">
        ${WOOD}
        <defs>
          <filter id="soft"><feGaussianBlur stdDeviation="1"/></filter>
          <linearGradient id="shade"><stop offset="0" stop-color="#888" stop-opacity=".5"/><stop offset=".3" stop-color="#888" stop-opacity=".7"/><stop offset=".8" stop-color="#888" stop-opacity=".6"/><stop offset="1" stop-color="#888" stop-opacity=".4"/></linearGradient>
          <linearGradient id="fade"><stop offset="0" stop-color="#666" stop-opacity="0"/><stop offset=".4" stop-color="#555"/><stop offset=".7" stop-color="#555"/><stop offset="1" stop-color="#666" stop-opacity="0"/></linearGradient>
          <linearGradient id="fadeDown" x2="0" y2="1"><stop offset="0" stop-color="#666" stop-opacity=".2"/><stop offset=".4" stop-color="#444"/><stop offset=".7" stop-color="#444"/><stop offset="1" stop-color="#666" stop-opacity="0"/></linearGradient>
        </defs>
        <g fill="none">${gridLines()}</g>
        <g font-size="12" font-style="italic" fill="#888"><text x="410" y="676" transform="rotate(-38 410 676)">150</text><text x="408" y="662" transform="rotate(-38 408 662)">0</text></g>
        <g stroke="#aaa" fill="#e4e4e4"><ellipse cx="674" cy="538" rx="8" ry="4" stroke-width="2"/><path d="M669 535l10 6M679 535l-10 6"/></g>
        <path d="M740 540L830 587 897 629" fill="none" stroke="url(#shade)" stroke-width="4" filter="url(#soft)"/>
        <g transform="translate(720 330) scale(.3333)">${LETTER}</g>
        <g transform="translate(850 310) scale(.3333)" stroke-linejoin="round">
          <path d="M20 422L585 94 602 104V122L587 130V183L602 190V210L35 537 18 527V512L35 500V452L18 440Z" fill="#9bb1d8" fill-opacity=".78"/>
          <path d="M55 402L585 94 602 104V122L587 130V183L602 190V210L82 510M60 415L600 104" fill="none" stroke="#3c4f74" stroke-width="3" stroke-dasharray="4 3"/>
          <path d="M20 422L50 405 66 512 35 537 18 527V512L35 500V452L18 440Z" fill="#c9d3e4" fill-opacity=".6"/>
          <path d="M500 190l-30 60 14 10 20-40z" fill="#8195c7" opacity=".6"/>
          <g fill="none" stroke-width="5">
            <path d="M130 270C170 160 290 30 410 28Q445 30 475 48" stroke="url(#fade)"/>
            <path d="M270 133C400 130 520 170 580 220Q620 270 625 335" stroke="url(#fade)"/>
            <path d="M470 235C510 280 545 400 525 500Q510 560 455 595" stroke="url(#fadeDown)"/>
          </g>
          <g fill="#ebecee" stroke="#4c4c4c" stroke-width="4">
            <ellipse cx="310" cy="60" rx="19" ry="28" transform="rotate(22 310 60)"/><ellipse cx="310" cy="61" rx="3" ry="6" stroke-width="2"/>
            <ellipse cx="531" cy="188" rx="28" ry="16"/><ellipse cx="531" cy="188" rx="7" ry="3" stroke-width="2"/>
            <ellipse cx="530" cy="443" rx="19" ry="28" transform="rotate(-25 530 443)"/><ellipse cx="530" cy="442" rx="4" ry="6" stroke-width="2"/>
            <path d="M309 137L340 165V174H318V208H301V174H278V165Z"/>
            <path d="M460 216L461 265H452L445 247 407 265 400 250 436 232 420 220V212Z"/>
            <path d="M342 212Q342 208 346 206L382 190V226Q382 232 378 234L342 254Z"/>
            <path d="M344 256L380 276Q385 280 385 286V320L350 302Q344 298 344 292Z"/>
            <path d="M387 318L418 298 454 318 424 339Q418 340 412 338Z"/>
            <path d="M402 364L436 378 440 362 460 364V400H430L405 374Z"/>
          </g>
          <circle cx="311" cy="315" r="27" fill="#fff" opacity=".7"/><circle cx="311" cy="315" r="18" fill="#2ea3dc" stroke="#225a78" stroke-width="4"/>
        </g>
        <g stroke-linejoin="round">
          <path d="M1294 206L1317 218 1344 200V180H1292Z" fill="#999" opacity=".5" filter="url(#soft)"/>
          <path d="M1291 171L1317 158 1345 170 1318 184Z" fill="#eee" stroke="#777" stroke-dasharray="3 1"/>
          <path d="M1291 171L1318 184V216L1293 202Z" fill="#f0f0f0" stroke="#999"/><path d="M1345 170L1318 184V216L1343 200Z" fill="#dedede" stroke="#999"/>
          <text x="1305" y="167" font-size="6" transform="rotate(27 1305 167)" fill="#888">SUPERIOR</text>
          <path d="M1290 166L1292 190" stroke="#7b7bff" stroke-width="2"/><path d="M1297 203L1321 220" stroke="#f08080" stroke-width="2"/>
          <text x="1285" y="163" font-size="11" font-weight="bold" fill="#8484f5">Z</text><text x="1322" y="227" font-size="11" font-weight="bold" fill="#f59090">X</text>
        </g>
      </svg>
      <div class="browser"><float-row>NAVEGADOR</float-row><float-row>COMENTARIOS</float-row></div>
      <div class="dialog"><float-row>MOVER/COPIAR</float-row></div>
      <move-fields></move-fields>
      <div class="tip" role="tooltip">Seleccionar componentes no fijos para desplazarlos</div>
      <view-tools></view-tools>
      <div class="picked">Pieza 02 v2:1</div>`
  }
}

class MoveFields extends BaseElement {
  connectedCallback() {
    super.connectedCallback()
    const first = this.shadowRoot.querySelector('input')
    first.focus()
    first.select()
  }
  render() {
    const dots = '<span class="dots"><i></i><i></i><i></i></span>'
    return `<style>${RESET}
        :host { display: flex; align-items: center; height: 22px; padding-right: 9px; background: #f0f0f0; }
        .grip { width: 7px; height: 18px; margin: 0 4px 0 3px; border-left: 3px dotted #ddd; border-right: 2px solid #ddd; box-sizing: border-box; }
        input { width: 69px; height: 20px; border: 1px solid #c8c8c8; background: #fff; text-align: center; font-size: 11px; outline: 0; }
        input::selection { background: #0078d7; color: #fff; }
        .dots { display: flex; flex-direction: column; align-items: center; gap: 2px; width: 24px; }
        i { width: 3px; height: 3px; border-radius: 50%; background: #8a8a8a; }
        button { padding-left: 6px; }
      </style>
      <span class="grip"></span>
      <input aria-label="Distancia X" value="238.734 mm">${dots}
      <input aria-label="Distancia Y" value="306.444 mm">${dots}
      <input aria-label="Distancia Z" value="67.71 mm">${dots}
      <button aria-label="Definir pivote"><fx-icon name="triad"></fx-icon></button>`
  }
}

class ViewTools extends BaseElement {
  render() {
    const items = [['orbit', 1], ['lookat'], ['hand'], ['zoom'], ['zoomWin', 1], ['display', 1], ['grid', 1], ['layout', 1]]
    return `<style>${RESET}
        :host { display: flex; align-items: center; gap: 8px; height: 24px; padding: 0 6px 0 2px; background: #f1f1f1; }
        button { height: 24px; }
        .wide { gap: 4px; margin-right: -4px; }
      </style>
      ${items.map(([name, menu]) => `<button aria-label="${name}" class="${menu ? 'wide' : ''}"><fx-icon name="${name}"></fx-icon>${menu ? '<fx-icon name="caretSmall"></fx-icon>' : ''}</button>`).join('')}`
  }
}

class TimeLine extends BaseElement {
  render() {
    return `<style>${RESET}
        :host { display: flex; align-items: center; height: 48px; padding: 0 13px 0 10px; gap: 11px; background: #f1f1f1; border-top: 2px solid #ccc; }
        .history { margin: 0 auto 0 10px; }
      </style>
      ${['first', 'back', 'play', 'next', 'last'].map(n => `<button aria-label="${n}"><fx-icon name="${n}"></fx-icon></button>`).join('')}
      <fx-icon class="history" name="history"></fx-icon>
      <button aria-label="Preferencias"><fx-icon name="gearGrey"></fx-icon></button>`
  }
}

class TaskBar extends BaseElement {
  render() {
    const apps = [['cortana'], ['taskview'], ['edge'], ['mail'], ['explorer', 'open'], ['dropbox'], ['arch'], ['chrome', 'open'], ['photos', 'open'], ['fusionBig', 'current']]
    return `<style>${RESET}
        :host { display: flex; align-items: stretch; height: 40px; background: #1c1c1c; color: #fff; font: 12px "Open Sans", sans-serif; }
        .start { width: 48px; }
        .search { display: flex; align-items: center; gap: 10px; width: 344px; box-sizing: border-box; padding-left: 12px; background: #f1f1f1; border: 1px solid #c4c4c4; border-left: 0; color: #333; }
        .search input { flex: 1; min-width: 0; font-size: 14px; outline: 0; }
        .search input::placeholder { color: #333; opacity: 1; }
        .apps { display: flex; flex: 1; gap: 1px; }
        .apps button { width: 48px; }
        .open { background: linear-gradient(#76b9ed, #76b9ed) bottom / 40px 2px no-repeat; }
        .current { background: linear-gradient(#76b9ed, #76b9ed) bottom / 100% 2px no-repeat #4c4c4c; }
        .tray { display: flex; align-items: center; }
        .weather { gap: 6px; margin: 0 18px 0 24px; font-size: 13px; }
        .battery { margin: 0 10px 0 8px; }
        .lang { margin-left: 10px; font-size: 11px; }
        .time { display: grid; justify-items: center; width: 66px; margin: 0 14px 0 10px; font-size: 11px; line-height: 18px; }
        .edge { align-self: stretch; width: 4px; margin-left: 10px; border-left: 1px solid #666; }
      </style>
      <button class="start" aria-label="Inicio"><fx-icon name="windows"></fx-icon></button>
      <label class="search"><fx-icon name="loupe"></fx-icon><input type="text" aria-label="Buscar" placeholder="Escribe aquí para buscar"></label>
      <div class="apps">${apps.map(([n, c]) => `<button aria-label="${n}" class="${c || ''}"><fx-icon name="${n}"></fx-icon></button>`).join('')}</div>
      <div class="tray">
        <fx-icon name="support"></fx-icon>
        <button class="weather"><fx-icon name="cloud"></fx-icon>17°C</button>
        <fx-icon name="up"></fx-icon><fx-icon class="battery" name="battery"></fx-icon><fx-icon name="wifi"></fx-icon>
        <span class="lang">ESP</span>
        <div class="time"><span>20:42</span><span>2/10/2021</span></div>
        <fx-icon name="notify"></fx-icon>
        <span class="edge"></span>
      </div>`
  }
}

customElements.define('fx-icon', FxIcon)
customElements.define('title-bar', TitleBar)
customElements.define('wood-part', WoodPart)
customElements.define('data-card', DataCard)
customElements.define('data-panel', DataPanel)
customElements.define('doc-tab', DocTab)
customElements.define('doc-bar', DocBar)
customElements.define('ribbon-group', RibbonGroup)
customElements.define('tool-ribbon', ToolRibbon)
customElements.define('float-row', FloatRow)
customElements.define('move-fields', MoveFields)
customElements.define('view-tools', ViewTools)
customElements.define('model-canvas', ModelCanvas)
customElements.define('time-line', TimeLine)
customElements.define('task-bar', TaskBar)
</script>
</body>
</html>
